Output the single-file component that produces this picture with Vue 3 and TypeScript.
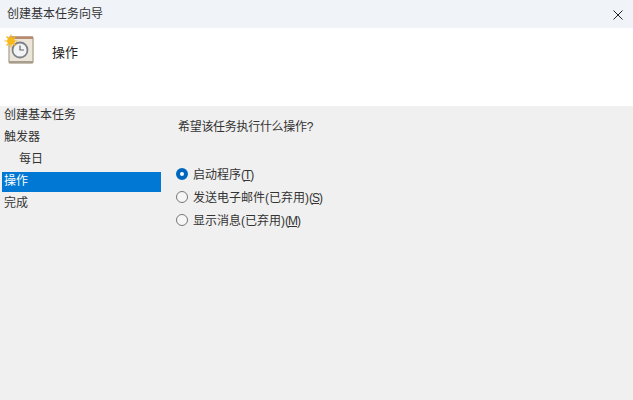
<script setup lang="ts">
interface NavItem { label: string; indent?: boolean; active?: boolean }
const nav: NavItem[] = [
  { label: '创建基本任务' },
  { label: '触发器' },
  { label: '每日', indent: true },
  { label: '操作', active: true },
  { label: '完成' },
]
const options = [
  { label: '启动程序', key: 'T', checked: true },
  { label: '发送电子邮件(已弃用)', key: 'S', checked: false },
  { label: '显示消息(已弃用)', key: 'M', checked: false },
]
</script>

<template>
  <div class="win">
    <div class="titlebar">
      <span class="title">创建基本任务向导</span>
      <svg class="close" width="10" height="10" viewBox="0 0 10 10">
        <path d="M0.5 0.5L9.5 9.5M9.5 0.5L0.5 9.5" stroke="#222" stroke-width="1" fill="none" />
      </svg>
    </div>
    <div class="header">
      <svg class="icon" width="30" height="30" viewBox="0 0 30 30">
        <rect x="5" y="3" width="24" height="26" rx="1" fill="#ece6da" stroke="#b5aa9a" stroke-width="1.4" />
        <rect x="6" y="2.5" width="23" height="2.5" fill="#b98a70" />
        <rect x="5" y="27" width="24" height="2" fill="#a89d8c" />
        <circle cx="16" cy="16" r="7.5" fill="#f1f3f5" stroke="#7d8288" stroke-width="1.8" />
        <path d="M16 11.5v4.5h4" stroke="#666" stroke-width="1.2" fill="none" />
        <circle cx="7" cy="7" r="3.8" fill="#f8b818" />
        <path d="M7 0.5v13M0.5 7h13M2.5 2.5l9 9M11.5 2.5l-9 9" stroke="#f8b818" stroke-width="1.2" />
      </svg>
      <span class="heading">操作</span>
    </div>
    <div class="body">
      <nav class="nav">
        <div
          v-for="item in nav"
          :key="item.label"
          class="nav-item"
          :class="{ indent: item.indent, active: item.active }"
        >{{ item.label }}</div>
      </nav>
      <main class="content">
        <div class="question">希望该任务执行什么操作?</div>
        <div class="options">
          <div v-for="o in options" :key="o.key" class="option">
            <span class="radio" :class="{ checked: o.checked }"></span>
            <span class="label">{{ o.label }}<span class="mnemonic">(<u>{{ o.key }}</u>)</span></span>
          </div>
        </div>
      </main>
    </div>
  </div>
</template>

<style>
html, body { margin: 0; padding: 0; background: #f0f0f0; }
</style>

<style scoped>
.win {
  width: 633px;
  height: 400px;
  display: flex;
  flex-direction: column;
  overflow: hidden;
  background: #f0f0f0;
  color: #222;
  font-family: "Liberation Sans", "Noto Sans CJK SC", sans-serif;
  font-size: 12px;
}
.titlebar {
  height: 28px;
  flex: none;
  display: flex;
  align-items: center;
  justify-content: space-between;
  padding: 0 10px 0 7px;
  background: #f0f4f9;
  box-sizing: border-box;
}
.title { color: #333; line-height: 16px; }
.close { margin-top: 1px; }
.header {
  height: 78px;
  flex: none;
  background: #fff;
  display: flex;
  align-items: flex-start;
  box-sizing: border-box;
  padding: 6px 0 0 4px;
}
.icon { flex: none; }
.heading {
  margin-left: 18px;
  margin-top: 10px;
  font-size: 13px;
  line-height: 18px;
}
.body { flex: 1; display: flex; min-height: 0; }
.nav { width: 161px; flex: none; padding-left: 2px; box-sizing: border-box; }
.nav-item {
  height: 20px;
  margin-bottom: 2px;
  line-height: 18px;
  padding-left: 2px;
  color: #333;
}
.nav-item.indent { padding-left: 17px; }
.nav-item.active { background: #0078d4; color: #fff; }
.content { flex: 1; padding: 12px 0 0 15px; }
.question { line-height: 18px; color: #333; padding-left: 2px; letter-spacing: -0.3px; }
.options { margin-top: 29px; display: flex; flex-direction: column; gap: 5px; }
.option { height: 18px; display: flex; align-items: center; gap: 5px; color: #333; line-height: 18px; }
.label { padding-top: 2px; line-height: 16px; }
.mnemonic { letter-spacing: -1px; }
.radio {
  width: 12px;
  height: 12px;
  box-sizing: border-box;
  border: 1px solid #777;
  border-radius: 50%;
  background: #f6f6f6;
  flex: none;
}
.radio.checked { border: 4px solid #0067c0; background: #fff; }
</style>
